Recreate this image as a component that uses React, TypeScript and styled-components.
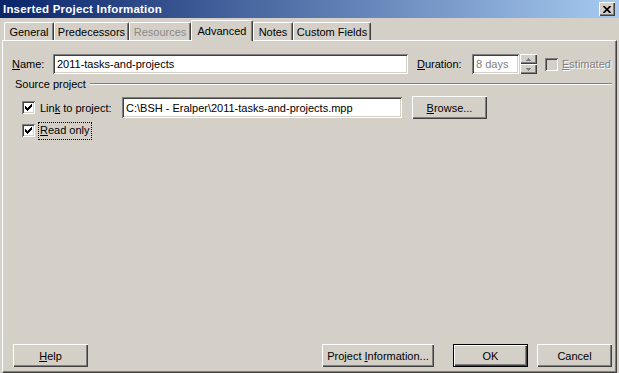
import React from 'react';
import styled, { createGlobalStyle } from 'styled-components';

const GlobalStyle = createGlobalStyle`
  html, body {
    margin: 0;
    padding: 0;
    background: #d4d0c8;
  }
  body {
    font-family: "Liberation Sans", Arial, sans-serif;
    font-size: 11px;
    color: #000;
  }
`;

const raised = 'inset 1px 1px #fff, inset -1px -1px #404040, inset -2px -2px #808080';
const sunken = 'inset 1px 1px #808080, inset -1px -1px #fff, inset 2px 2px #404040, inset -2px -2px #d4d0c8';

const Dialog = styled.div`
  width: 619px;
  height: 373px;
  display: flex;
  flex-direction: column;
  background: #d4d0c8;
  overflow: hidden;
`;

const TitleBar = styled.div`
  flex: none;
  height: 18px;
  display: flex;
  align-items: center;
  justify-content: space-between;
  padding: 0 4px 0 3px;
  background: linear-gradient(to right, #0a246a, #a6caf0);
`;

const Title = styled.span`
  color: #fff;
  font-weight: bold;
  font-size: 11.5px;
  letter-spacing: 0.2px;
`;

const CloseButton = styled.div`
  width: 16px;
  height: 14px;
  background: #d4d0c8;
  box-shadow: ${raised};
  display: flex;
  align-items: center;
  justify-content: center;
`;

const TabStrip = styled.div`
  flex: none;
  height: 22px;
  display: flex;
  align-items: flex-end;
  padding-left: 4px;
  position: relative;
  z-index: 1;
`;

const Tab = styled.div<{ $width: number; $active?: boolean; $disabled?: boolean }>`
  width: ${p => p.$width}px;
  height: ${p => (p.$active ? 21 : 18)}px;
  margin-bottom: ${p => (p.$active ? -1 : 0)}px;
  padding-bottom: ${p => (p.$active ? 1 : 0)}px;
  box-sizing: border-box;
  background: #d4d0c8;
  border-top: 1px solid #fff;
  border-left: 1px solid #fff;
  border-right: 1px solid #404040;
  border-radius: 2px 2px 0 0;
  box-shadow: inset -1px 0 #808080;
  display: flex;
  align-items: center;
  justify-content: center;
  white-space: nowrap;
  color: ${p => (p.$disabled ? '#8a8a8a' : '#000')};
`;

const Panel = styled.div`
  flex: 1;
  margin: 0 2px;
  box-sizing: border-box;
  border-top: 1px solid #fff;
  border-left: 1px solid #fff;
  border-right: 1px solid #404040;
  border-bottom: 1px solid #404040;
  box-shadow: inset -1px -1px #808080;
  display: flex;
  flex-direction: column;
  padding: 13px 4px 5px 9px;
`;

const NameRow = styled.div`
  height: 20px;
  display: flex;
  align-items: center;
`;

const FieldLabel = styled.span<{ $width?: number; $gap?: number; $disabled?: boolean }>`
  flex: none;
  width: ${p => (p.$width ? `${p.$width}px` : 'auto')};
  margin-left: ${p => p.$gap || 0}px;
  white-space: nowrap;
  color: ${p => (p.$disabled ? '#808080' : '#000')};
  text-shadow: ${p => (p.$disabled ? '1px 1px #fff' : 'none')};
`;

const Key = styled.span`
  text-decoration: underline;
`;

const TextBox = styled.div<{ $width: number; $height?: number; $disabled?: boolean }>`
  flex: none;
  width: ${p => p.$width}px;
  height: ${p => p.$height || 20}px;
  box-sizing: border-box;
  padding: 0 4px;
  background: #fff;
  box-shadow: ${sunken};
  display: flex;
  align-items: center;
  white-space: nowrap;
  overflow: hidden;
  color: ${p => (p.$disabled ? '#808080' : '#000')};
`;

const Spinner = styled.div`
  flex: none;
  width: 17px;
  height: 20px;
  margin-left: 1px;
  display: flex;
  flex-direction: column;
`;

const SpinHalf = styled.div`
  flex: 1;
  background: #d4d0c8;
  box-shadow: ${raised};
  display: flex;
  align-items: center;
  justify-content: center;
`;

const CheckBox = styled.span<{ $disabled?: boolean; $gap?: number }>`
  flex: none;
  width: 13px;
  height: 13px;
  margin-left: ${p => p.$gap || 0}px;
  background: ${p => (p.$disabled ? '#d4d0c8' : '#fff')};
  box-shadow: ${sunken};
  display: inline-flex;
`;

const GroupHeader = styled.div`
  height: 14px;
  margin-top: 3px;
  padding-left: 3px;
  display: flex;
  align-items: center;
`;

const Rule = styled.div`
  flex: 1;
  margin-left: 4px;
  border-top: 1px solid #808080;
  border-bottom: 1px solid #fff;
`;

const OptionRow = styled.div<{ $height: number; $top: number }>`
  height: ${p => p.$height}px;
  margin-top: ${p => p.$top}px;
  padding-left: 10px;
  display: flex;
  align-items: center;
`;

const FocusLabel = styled.span`
  margin-left: 3px;
  padding: 1px 1px 2px;
  border: 1px dotted #000;
  line-height: 13px;
`;

const Spacer = styled.div`
  flex: 1;
`;

const ButtonRow = styled.div`
  display: flex;
  align-items: center;
  padding-left: 1px;
`;

const Button = styled.button<{ $width: number; $gap?: number; $default?: boolean }>`
  flex: none;
  width: ${p => p.$width}px;
  height: 23px;
  margin: 0 0 0 ${p => p.$gap || 0}px;
  padding: 0;
  box-sizing: border-box;
  background: #d4d0c8;
  border: ${p => (p.$default ? '1px solid #000' : 'none')};
  box-shadow: ${raised};
  font: inherit;
  color: #000;
`;

function CheckMark() {
  return (
    <svg width="13" height="13" viewBox="0 0 13 13">
      <path
        d="M9 3h1v1h-1z M8 4h2v1h-2z M3 5h1v1h-1z M7 5h3v1h-3z M3 6h2v1h-2z M6 6h3v1h-3z M3 7h5v1h-5z M4 8h3v1h-3z M5 9h1v1h-1z"
        fill="#000"
      />
    </svg>
  );
}

function Arrow({ up }: { up?: boolean }) {
  return (
    <svg width="5" height="3" viewBox="0 0 5 3">
      <path d={up ? 'M2 0h1v1h1v1h1v1h-5v-1h1v-1h1z' : 'M0 0h5v1h-1v1h-1v1h-1v-1h-1v-1h-1z'} fill="#808080" />
    </svg>
  );
}

export default function App(): React.ReactElement {
  return (
    <>
      <GlobalStyle />
      <Dialog>
        <TitleBar>
          <Title>Inserted Project Information</Title>
          <CloseButton>
            <svg width="8" height="7" viewBox="0 0 8 7">
              <path d="M0.5 0 L7.5 7 M7.5 0 L0.5 7" stroke="#000" strokeWidth="1.7" />
            </svg>
          </CloseButton>
        </TitleBar>

        <TabStrip>
          <Tab $width={50}>General</Tab>
          <Tab $width={75}>Predecessors</Tab>
          <Tab $width={62} $disabled>Resources</Tab>
          <Tab $width={62} $active>Advanced</Tab>
          <Tab $width={40}>Notes</Tab>
          <Tab $width={78}>Custom Fields</Tab>
        </TabStrip>

        <Panel>
          <NameRow>
            <FieldLabel $width={41}><Key>N</Key>ame:</FieldLabel>
            <TextBox $width={355}>2011-tasks-and-projects</TextBox>
            <FieldLabel $width={55} $gap={9}><Key>D</Key>uration:</FieldLabel>
            <TextBox $width={47} $disabled>8 days</TextBox>
            <Spinner>
              <SpinHalf><Arrow up /></SpinHalf>
              <SpinHalf><Arrow /></SpinHalf>
            </Spinner>
            <CheckBox $disabled $gap={8} />
            <FieldLabel $gap={4} $disabled><Key>E</Key>stimated</FieldLabel>
          </NameRow>

          <GroupHeader>
            Source project
            <Rule />
          </GroupHeader>

          <OptionRow $height={23} $top={5}>
            <CheckBox><CheckMark /></CheckBox>
            <FieldLabel $width={82} $gap={5}>Lin<Key>k</Key> to project:</FieldLabel>
            <TextBox $width={280} $height={21}>C:\BSH - Eralper\2011-tasks-and-projects.mpp</TextBox>
            <Button $width={75} $gap={10}><Key>B</Key>rowse...</Button>
          </OptionRow>

          <OptionRow $height={19} $top={2}>
            <CheckBox><CheckMark /></CheckBox>
            <FocusLabel><Key>R</Key>ead only</FocusLabel>
          </OptionRow>

          <Spacer />

          <ButtonRow>
            <Button $width={75}><Key>H</Key>elp</Button>
            <Spacer />
            <Button $width={112}>Project <Key>I</Key>nformation...</Button>
            <Button $width={75} $gap={19} $default>OK</Button>
            <Button $width={75} $gap={9}>Cancel</Button>
          </ButtonRow>
        </Panel>
      </Dialog>
    </>
  );
}
